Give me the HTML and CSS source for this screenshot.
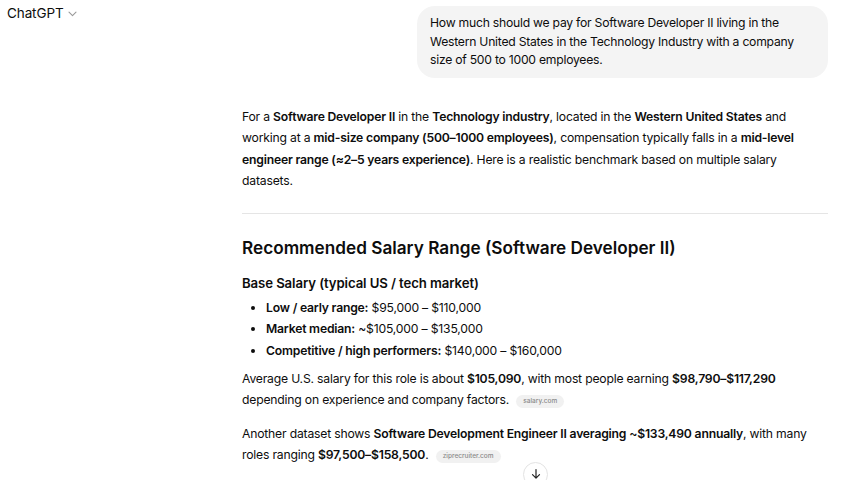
FILE: index.html
```html
<!DOCTYPE html>
<html lang="en">
<head>
<meta charset="utf-8">
<title>ChatGPT</title>
<link rel="stylesheet" href="styles.css">
</head>
<body>
<header class="topbar">
  <span class="brand">ChatGPT</span>
  <svg class="chev" width="9" height="6" viewBox="0 0 9 6"><path d="M1 1.2 L4.5 4.7 L8 1.2" fill="none" stroke="#9a9a9a" stroke-width="1.1" stroke-linecap="round" stroke-linejoin="round"/></svg>
</header>
<main class="thread">
  <div class="user-row">
    <div class="bubble">How much should we pay for Software Developer II living in the Western United States in the Technology Industry with a company size of 500 to 1000 employees.</div>
  </div>
  <article class="answer">
    <p class="intro">For a <b>Software Developer II</b> in the <b>Technology industry</b>, located in the <b>Western United States</b> and working at a <b>mid-size company (500–1000 employees)</b>, compensation typically falls in a <b>mid-level engineer range (≈2–5 years experience)</b>. Here is a realistic benchmark based on multiple salary datasets.</p>
    <hr class="rule">
    <h2 class="h2">Recommended Salary Range (Software Developer II)</h2>
    <h3 class="h3">Base Salary (typical US / tech market)</h3>
    <ul class="list">
      <li><b>Low / early range:</b> $95,000 – $110,000</li>
      <li><b>Market median:</b> ~$105,000 – $135,000</li>
      <li><b>Competitive / high performers:</b> $140,000 – $160,000</li>
    </ul>
    <p class="para">Average U.S. salary for this role is about <b>$105,090</b>, with most people earning <b>$98,790–$117,290</b> depending on experience and company factors. <span class="pill">salary.com</span></p>
    <p class="para gap">Another dataset shows <b>Software Development Engineer II averaging ~$133,490 annually</b>, with many roles ranging <b>$97,500–$158,500</b>. <span class="pill">ziprecruiter.com</span></p>
  </article>
  <button class="scroll-btn" aria-label="Scroll down">
    <svg width="12" height="12" viewBox="0 0 12 12"><path d="M6 1.5 V10 M2.5 6.7 L6 10.2 L9.5 6.7" fill="none" stroke="#222" stroke-width="1.2" stroke-linecap="round" stroke-linejoin="round"/></svg>
  </button>
</main>
</body>
</html>
```
FILE: styles.css
```css
* { box-sizing: border-box; }
html, body { margin: 0; padding: 0; background: #fff; }
body {
  font-family: Inter, "Noto Sans", "Liberation Sans", sans-serif;
  color: #0d0d0d;
  width: 852px;
  height: 480px;
  overflow: hidden;
  position: relative;
}
.topbar {
  position: absolute;
  top: 4px;
  left: 7px;
  display: flex;
  align-items: center;
  gap: 4px;
  height: 18px;
}
.brand {
  font-size: 13.5px;
  color: #0d0d0d;
  letter-spacing: -0.1px;
}
.chev { margin-top: 1px; }
.thread {
  padding: 6px 24px 0 242px;
  display: flex;
  flex-direction: column;
}
.user-row {
  display: flex;
  justify-content: flex-end;
}
.bubble {
  max-width: 411px;
  background: #f4f4f4;
  border-radius: 18px;
  padding: 8px 13px 8px 13px;
  font-size: 12.2px;
  letter-spacing: -0.25px;
  line-height: 18.5px;
}
.answer {
  margin-top: 28px;
  font-size: 12.2px;
  letter-spacing: -0.2px;
  line-height: 21.6px;
}
.answer b { font-weight: 600; }
.intro { margin: 0; }
.rule {
  border: 0;
  border-top: 1px solid #e5e5e5;
  margin: 21px 0 0 0;
}
.h2 {
  font-size: 17.2px;
  font-weight: 600;
  line-height: 22px;
  margin: 23px 0 0 0;
  letter-spacing: 0;
}
.h3 {
  font-size: 13.2px;
  font-weight: 600;
  line-height: 20px;
  margin: 14px 0 0 0;
  letter-spacing: -0.1px;
}
.list {
  margin: 4px 0 0 0;
  padding: 0 0 0 24px;
  list-style: none;
}
.list li::before {
  content: "";
  display: inline-block;
  width: 4px;
  height: 4px;
  border-radius: 50%;
  background: #0d0d0d;
  margin-left: -15px;
  margin-right: 11px;
  vertical-align: 2px;
}
.para { margin: 6px 0 0 0; }
.para.gap { margin-top: 12px; }
.pill {
  display: inline-block;
  vertical-align: 1px;
  margin-left: 4px;
  padding: 0 7px;
  height: 13px;
  line-height: 13px;
  border-radius: 7px;
  background: #f1f1f1;
  color: #8a8a8a;
  font-size: 6.5px;
  font-weight: 500;
  letter-spacing: 0;
}
.scroll-btn {
  position: absolute;
  left: 523px;
  top: 462px;
  width: 25px;
  height: 25px;
  border-radius: 50%;
  border: 1px solid #e3e3e3;
  background: #fff;
  padding: 0;
  display: flex;
  align-items: flex-start;
  justify-content: center;
  padding-top: 5px;
}
```
